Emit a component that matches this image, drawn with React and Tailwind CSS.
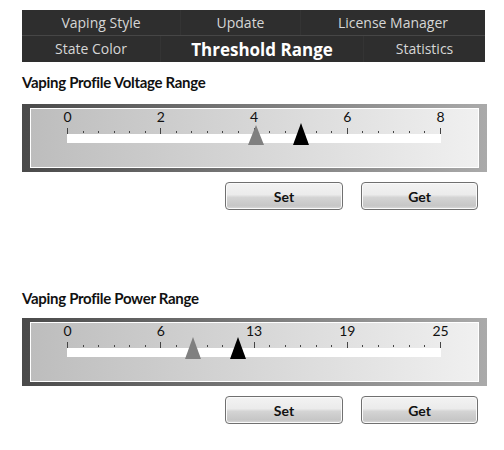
import React from "react";

const TICK_LEFT = 36;
const TICK_RIGHT = 409;

function RangeTrack({ labels, grayX, blackX, grayTop = 16, blackTop = 14 }) {
    const step = (TICK_RIGHT - TICK_LEFT) / 24;
    const ticks = [];
    for (let i = 0; i <= 24; i++) {
        const x = Math.round(TICK_LEFT + i * step) + 0.5;
        if (i % 6 === 0) {
            ticks.push(<line key={i} x1={x} x2={x} y1={19} y2={25} stroke="#444" strokeWidth="1" />);
        } else {
            ticks.push(<rect key={i} x={x - 0.5} y={22} width="1" height="2" fill="#444" />);
        }
    }
    return (
        <svg width="446" height="58" className="block">
            {labels.map((l, i) => (
                <text
                    key={l}
                    x={TICK_LEFT + i * (step * 6) + 0.5}
                    y={13}
                    textAnchor="middle"
                    fontSize="14"
                    fontFamily="Lato, 'Noto Sans', sans-serif"
                    fill="#111"
                >
                    {l}
                </text>
            ))}
            {ticks}
            <rect x={TICK_LEFT} y={25} width={TICK_RIGHT - TICK_LEFT + 1} height={9} fill="#fff" />
            <polygon points={`${grayX - 8},36 ${grayX + 8},36 ${grayX},${grayTop}`} fill="#808080" />
            <polygon points={`${blackX - 8},36 ${blackX + 8},36 ${blackX},${blackTop}`} fill="#000" />
        </svg>
    );
}

function RangePanel(props) {
    return (
        <div className="w-[465px] px-[8px] py-[4px] bg-[linear-gradient(to_right,#4a4a4a,#aaaaaa)]">
            <div className="border border-white bg-[linear-gradient(to_right,#bdbdbd,#f0f0f0)]">
                <RangeTrack {...props} />
            </div>
        </div>
    );
}

function AeroButton({ children, className }) {
    return (
        <button
            className={`h-[28px] rounded-[4px] border border-[#707070] shadow-[inset_0_0_0_1px_#fafafa] bg-[linear-gradient(to_bottom,#f3f3f3_0%,#ebebeb_45%,#d4d4d4_55%,#c6c6c6_88%,#dcdcdc_100%)] text-[14px] font-bold text-[#111] ${className}`}
        >
            {children}
        </button>
    );
}

function Tab({ label, w, active }) {
    return (
        <div
            className={`flex items-center justify-center border-l border-[#343434] first:border-l-0 ${
                active ? "text-white text-[17px] font-bold" : "text-[#d6d6d6] text-[14px]"
            }`}
            style={{ width: w }}
        >
            {label}
        </div>
    );
}

export default function App() {
    return (
        <div className="w-[504px] h-[450px] bg-white pl-[22px] pt-[10px] font-['Open_Sans',sans-serif]">
            {/* tab strip, two rows */}
            <div className="w-[463px] bg-[#2e2e2e]">
                <div className="flex h-[26px] border-b border-[#464646] leading-none">
                    <Tab label="Vaping Style" w={158} />
                    <Tab label="Update" w={120} />
                    <Tab label="License Manager" w={185} />
                </div>
                <div className="flex h-[26px] leading-none">
                    <Tab label="State Color" w={138} />
                    <Tab label="Threshold Range" w={203} active />
                    <Tab label="Statistics" w={122} />
                </div>
            </div>

            <div className="h-[42px] flex items-center pb-[2px] font-['Lato',sans-serif] font-bold text-[15px] text-[#111] tracking-[-0.3px]">
                Vaping Profile Voltage Range
            </div>
            <RangePanel labels={["0", "2", "4", "6", "8"]} grayX={225} blackX={270} />
            <div className="flex justify-end gap-[18px] w-[456px] mt-[10px] font-['Lato',sans-serif]">
                <AeroButton className="w-[118px]">Set</AeroButton>
                <AeroButton className="w-[117px]">Get</AeroButton>
            </div>

            <div className="h-[42px] mt-[66px] flex items-center pt-[2px] font-['Lato',sans-serif] font-bold text-[15px] text-[#111] tracking-[-0.3px]">
                Vaping Profile Power Range
            </div>
            <RangePanel labels={["0", "6", "13", "19", "25"]} grayX={162} blackX={207} grayTop={14} blackTop={14} />
            <div className="flex justify-end gap-[18px] w-[456px] mt-[10px] font-['Lato',sans-serif]">
                <AeroButton className="w-[118px]">Set</AeroButton>
                <AeroButton className="w-[117px]">Get</AeroButton>
            </div>
        </div>
    );
}
